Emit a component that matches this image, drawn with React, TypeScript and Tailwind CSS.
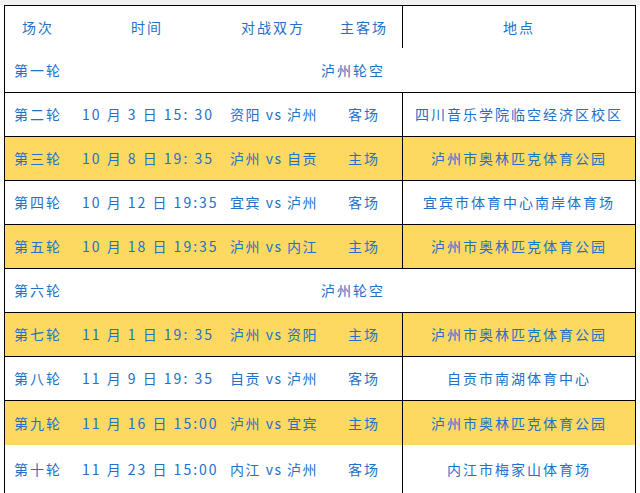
const font = "font-['Noto_Sans_CJK_SC','Noto_Sans',sans-serif]"

type Match = {
  round: string
  time?: string
  teams?: string
  side?: string
  venue?: string
  hot?: boolean
  bye?: boolean
  last?: boolean
  noLine?: boolean
}

const rows: Match[] = [
  { round: '第一轮', bye: true },
  { round: '第二轮', time: '10 月 3 日 15: 30', teams: '资阳 vs 泸州', side: '客场', venue: '四川音乐学院临空经济区校区' },
  { round: '第三轮', time: '10 月 8 日 19: 35', teams: '泸州 vs 自贡', side: '主场', venue: '泸州市奥林匹克体育公园', hot: true },
  { round: '第四轮', time: '10 月 12 日 19:35', teams: '宜宾 vs 泸州', side: '客场', venue: '宜宾市体育中心南岸体育场' },
  { round: '第五轮', time: '10 月 18 日 19:35', teams: '泸州 vs 内江', side: '主场', venue: '泸州市奥林匹克体育公园', hot: true },
  { round: '第六轮', bye: true },
  { round: '第七轮', time: '11 月 1 日 19: 35', teams: '泸州 vs 资阳', side: '主场', venue: '泸州市奥林匹克体育公园', hot: true },
  { round: '第八轮', time: '11 月 9 日 19: 35', teams: '自贡 vs 泸州', side: '客场', venue: '自贡市南湖体育中心' },
  { round: '第九轮', time: '11 月 16 日 15:00', teams: '泸州 vs 宜宾', side: '主场', venue: '泸州市奥林匹克体育公园', hot: true, noLine: true },
  { round: '第十轮', time: '11 月 23 日 15:00', teams: '内江 vs 泸州', side: '客场', venue: '内江市梅家山体育场', last: true },
]

function Row({ m }: { m: Match }) {
  const base = m.last
    ? 'h-[48px]'
    : m.noLine
      ? 'h-[44px]'
      : 'h-[44px] border-b border-black'
  const bg = m.hot ? 'bg-[#fdd962]' : 'bg-white'

  if (m.bye) {
    return (
      <div className={`flex items-center ${m.round === '第一轮' ? 'h-[45px] border-b border-black' : base} ${bg}`}>
        <div className="w-[67px] pl-[9px]">{m.round}</div>
        <div className="pl-[249px]">泸州轮空</div>
      </div>
    )
  }

  return (
    <div className={`flex ${base} ${bg}`}>
      <div className="w-[67px] pl-[9px] flex items-center">{m.round}</div>
      <div className="w-[152px] pl-[10px] flex items-center whitespace-pre">{m.time}</div>
      <div className="w-[110px] pl-[6px] flex items-center whitespace-pre tracking-[1.5px]">{m.teams}</div>
      <div className="w-[68px] pl-[14px] flex items-center">{m.side}</div>
      <div className="flex-1 border-l border-black flex items-center justify-center">{m.venue}</div>
    </div>
  )
}

export default function App() {
  return (
    <div className={`w-[640px] h-[493px] overflow-hidden bg-white ${font} text-[14px] tracking-[2px] text-[#2370c8]`}>
      <div className="h-[5px] bg-[#f1f1f1]" />
      <div className="ml-[4px] w-[632px] border-x border-t border-black">
        <div className="flex h-[42px]">
          <div className="w-[67px] pl-[17px] flex items-center">场次</div>
          <div className="w-[152px] pl-[59px] flex items-center">时间</div>
          <div className="w-[110px] pl-[17px] flex items-center">对战双方</div>
          <div className="w-[68px] pl-[6px] flex items-center">主客场</div>
          <div className="flex-1 border-l border-black flex items-center justify-center">地点</div>
        </div>
        {rows.map((m) => (
          <Row key={m.round} m={m} />
        ))}
      </div>
    </div>
  )
}
